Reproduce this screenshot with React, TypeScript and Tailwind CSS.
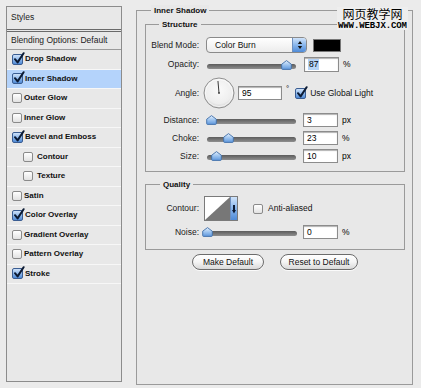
import React from "react";

const F = "font-['Liberation_Sans',Arial,sans-serif]";

function Check({ checked, className = "" }: { checked?: boolean; className?: string }) {
  if (checked) {
    return (
      <span className={`relative inline-flex w-[11px] h-[11px] shrink-0 rounded-[2px] border border-[#3a5d92] bg-linear-to-b from-[#cfe2f9] via-[#8fb9ec] to-[#4f8ad6] ${className}`}>
        <svg width="12" height="13" viewBox="0 0 12 13" className="absolute left-[0px] top-[-3px]">
          <path d="M2 7.2 L4.6 10.4 L10.6 1.2" stroke="#0b1a33" strokeWidth="2" fill="none" strokeLinecap="round" strokeLinejoin="round" />
        </svg>
      </span>
    );
  }
  return (
    <span className={`inline-flex w-[10px] h-[10px] shrink-0 rounded-[2px] border border-[#8a8a8a] bg-linear-to-b from-white to-[#e2e2e2] ${className}`} />
  );
}

function Thumb() {
  return (
    <svg width="11" height="10" viewBox="0 0 11 10">
      <defs>
        <linearGradient id="tg" x1="0" y1="0" x2="0" y2="1">
          <stop offset="0" stopColor="#e4f0fd" />
          <stop offset="0.5" stopColor="#9cc3ef" />
          <stop offset="1" stopColor="#5e97dc" />
        </linearGradient>
      </defs>
      <path d="M5.5 0.6 L10.3 4.2 L10.3 8.6 Q10.3 9.4 9.5 9.4 L1.5 9.4 Q0.7 9.4 0.7 8.6 L0.7 4.2 Z" fill="url(#tg)" stroke="#3f6ea8" strokeWidth="0.9" />
    </svg>
  );
}

function Slider({ width, pos }: { width: number; pos: number }) {
  return (
    <div className="relative h-[12px] shrink-0" style={{ width }}>
      <div className="absolute left-0 right-0 top-[5px] h-[5px] rounded-full bg-linear-to-b from-[#5c5c5c] to-[#8f8f8f]" />
      <div className="absolute top-[1px]" style={{ left: pos - 5.5 }}>
        <Thumb />
      </div>
    </div>
  );
}

function NumBox({ value, w = 35, h = 14, selected }: { value: string; w?: number; h?: number; selected?: boolean }) {
  return (
    <div
      className="flex items-center shrink-0 border border-[#8c8c8c] bg-white shadow-[inset_0_1px_1px_rgba(0,0,0,0.3)] pl-[3px] text-[8.5px] text-black"
      style={{ width: w, height: h }}
    >
      {selected ? <span className="bg-[#b5d3f7] px-[1px] leading-[11px]">{value}</span> : <span>{value}</span>}
    </div>
  );
}

function Label({ children, w = 53 }: { children: React.ReactNode; w?: number }) {
  return (
    <div className="shrink-0 text-right text-[8.5px] text-[#1a1a1a]" style={{ width: w }}>
      {children}
    </div>
  );
}

function Dial() {
  const a = (95 * Math.PI) / 180;
  const x = 16 + 12 * Math.cos(a);
  const y = 16 - 12 * Math.sin(a);
  return (
    <svg width="32" height="32" viewBox="0 0 32 32" className="shrink-0">
      <defs>
        <radialGradient id="dg" cx="0.5" cy="0.4" r="0.6">
          <stop offset="0" stopColor="#fafafa" />
          <stop offset="0.75" stopColor="#eeeeee" />
          <stop offset="1" stopColor="#cfcfcf" />
        </radialGradient>
      </defs>
      <circle cx="16" cy="16" r="15" fill="url(#dg)" stroke="#8f8f8f" strokeWidth="1" />
      <circle cx="16" cy="16" r="13.6" fill="none" stroke="#ffffff" strokeWidth="0.8" opacity="0.8" />
      <line x1="16" y1="16" x2={x} y2={y} stroke="#3a3a3a" strokeWidth="1" />
      <circle cx="16" cy="16" r="0.9" fill="#3a3a3a" />
    </svg>
  );
}

function Legend({ children, left }: { children: React.ReactNode; left: number }) {
  return (
    <div
      className="absolute top-[-6px] bg-[#e8e8e8] px-[3px] text-[8px] leading-[11px] font-bold text-[#111]"
      style={{ left }}
    >
      {children}
    </div>
  );
}

const items: { label: string; checked?: boolean; selected?: boolean; indent?: boolean }[] = [
  { label: "Drop Shadow", checked: true },
  { label: "Inner Shadow", checked: true, selected: true },
  { label: "Outer Glow" },
  { label: "Inner Glow" },
  { label: "Bevel and Emboss", checked: true },
  { label: "Contour", indent: true },
  { label: "Texture", indent: true },
  { label: "Satin" },
  { label: "Color Overlay", checked: true },
  { label: "Gradient Overlay" },
  { label: "Pattern Overlay" },
  { label: "Stroke", checked: true },
];

function Button({ children, w }: { children: React.ReactNode; w: number }) {
  return (
    <div
      className="flex h-[16px] items-center justify-center rounded-full border border-[#6c6c6c] bg-linear-to-b from-white via-[#f4f4f4] to-[#d9d9d9] text-[8.5px] text-[#111] shadow-[0_1px_0_rgba(255,255,255,0.8)]"
      style={{ width: w }}
    >
      {children}
    </div>
  );
}

export default function App() {
  return (
    <div className={`relative flex w-[421px] h-[388px] bg-[#ebebeb] pl-[6px] pt-[6px] ${F}`}>
      {/* Left list */}
      <div className="flex flex-col w-[116px] h-[376px] border border-[#8c8c8c] bg-[#e8e8e8]">
        <div className="flex h-[25px] items-center pl-[4px] pb-[1px] border-b-[3px] border-double border-[#6a6a6a] text-[8.5px] text-[#222]">
          Styles
        </div>
        <div className="flex h-[18px] items-center pl-[4px] border-b border-[#9a9a9a] text-[8.5px] text-[#222]">
          Blending Options: Default
        </div>
        {items.map((it) => (
          <div
            key={it.label}
            className={`flex h-[19.5px] items-center gap-[2px] border-b border-[#f7f7f7] text-[8px] font-bold text-[#111] ${
              it.indent ? "pl-[16px]" : "pl-[5px]"
            } ${it.selected ? "bg-[#b4d3fb]" : ""}`}
          >
            <Check checked={it.checked} className={it.indent ? "mr-[2px]" : ""} />
            <span>{it.label}</span>
          </div>
        ))}
      </div>

      {/* Right panel */}
      <div className="relative ml-[14px] mt-[4px] w-[277px] h-[375px] border border-[#9a9a9a] bg-[#e8e8e8] pl-[8px] pt-[13px]">
        <Legend left={14}>Inner Shadow</Legend>

        {/* Structure */}
        <div className="relative w-[260px] h-[148px] border border-[#9a9a9a] flex flex-col">
          <Legend left={13}>Structure</Legend>

          <div className="flex items-center h-[16px] mt-[12px]">
            <Label>Blend Mode:</Label>
            <div className="ml-[7px] flex w-[101px] h-[16px] rounded-[4px] border border-[#8a8a8a] bg-linear-to-b from-white to-[#ececec] overflow-hidden">
              <div className="flex-1 flex items-center pl-[8px] text-[8.5px] text-[#111]">Color Burn</div>
              <div className="flex w-[14px] flex-col items-center justify-center gap-[1px] border-l border-[#6d8fbf] bg-linear-to-b from-[#cfe3fa] via-[#89b6ec] to-[#4f8bd8]">
                <svg width="6" height="10" viewBox="0 0 6 10">
                  <path d="M3 1 L5.2 4 L0.8 4 Z" fill="#111" />
                  <path d="M3 9 L5.2 6 L0.8 6 Z" fill="#111" />
                </svg>
              </div>
            </div>
            <div className="ml-[6px] w-[28px] h-[13px] bg-black border border-[#777]" />
          </div>

          <div className="flex items-center h-[15px] mt-[4px]">
            <Label>Opacity:</Label>
            <div className="ml-[8px]"><Slider width={89} pos={79} /></div>
            <div className="ml-[8px]"><NumBox value="87" h={15} selected /></div>
            <span className="ml-[4px] text-[8.5px]">%</span>
          </div>

          <div className="flex items-center h-[32px] mt-[5px]">
            <Label>Angle:</Label>
            <div className="ml-[4px]"><Dial /></div>
            <div className="ml-[3px]"><NumBox value="95" w={44} /></div>
            <span className="ml-[4px] self-start mt-[8px] text-[8px] leading-[8px]">°</span>
            <Check checked className="ml-[6px]" />
            <span className="ml-[4px] text-[8.5px] text-[#111]">Use Global Light</span>
          </div>

          <div className="flex items-center h-[14px] mt-[4px]">
            <Label>Distance:</Label>
            <div className="ml-[8px]"><Slider width={89} pos={4} /></div>
            <div className="ml-[7px]"><NumBox value="3" /></div>
            <span className="ml-[4px] text-[8.5px]">px</span>
          </div>

          <div className="flex items-center h-[14px] mt-[4px]">
            <Label>Choke:</Label>
            <div className="ml-[8px]"><Slider width={89} pos={21} /></div>
            <div className="ml-[7px]"><NumBox value="23" /></div>
            <span className="ml-[4px] text-[8.5px]">%</span>
          </div>

          <div className="flex items-center h-[14px] mt-[4px]">
            <Label>Size:</Label>
            <div className="ml-[8px]"><Slider width={89} pos={9} /></div>
            <div className="ml-[7px]"><NumBox value="10" /></div>
            <span className="ml-[4px] text-[8.5px]">px</span>
          </div>
        </div>

        {/* Quality */}
        <div className="relative mt-[12px] w-[260px] h-[66px] border border-[#9a9a9a] flex flex-col">
          <Legend left={14}>Quality</Legend>

          <div className="flex items-center h-[25px] mt-[11px]">
            <Label>Contour:</Label>
            <div className="ml-[5px] flex w-[34px] h-[25px] border border-[#7a7a7a] bg-white overflow-hidden">
              <svg width="25" height="23" viewBox="0 0 25 23" className="shrink-0">
                <path d="M0 23 L25 0 L25 23 Z" fill="#777" />
              </svg>
              <div className="flex flex-1 items-center justify-center border-l border-[#6d8fbf] bg-linear-to-b from-[#cfe3fa] via-[#89b6ec] to-[#4f8bd8]">
                <svg width="4" height="10" viewBox="0 0 4 10">
                  <path d="M1 1 L3 1 L3 6 L4 6 L2 9.5 L0 6 L1 6 Z" fill="#0b1a33" />
                </svg>
              </div>
            </div>
            <Check className="ml-[15px]" />
            <span className="ml-[5px] text-[8.5px] text-[#111]">Anti-aliased</span>
          </div>

          <div className="flex items-center h-[14px] mt-[4px]">
            <Label>Noise:</Label>
            <div className="ml-[4px]"><Slider width={94} pos={4} /></div>
            <div className="ml-[6px]"><NumBox value="0" /></div>
            <span className="ml-[4px] text-[8.5px]">%</span>
          </div>
        </div>

        {/* Buttons */}
        <div className="mt-[4px] flex w-[260px] justify-center gap-[16px]">
          <Button w={72}>Make Default</Button>
          <Button w={78}>Reset to Default</Button>
        </div>
      </div>

      {/* Watermark */}
      <div className="absolute left-[337px] top-[7px] flex flex-col items-center bg-[#eeeeee] px-[1px]">
        <span className="text-[12px] leading-[13px] text-black font-['Noto_Sans_CJK_SC',sans-serif] [text-shadow:0_0_1px_#fff]">网页教学网</span>
        <span className="mt-[2px] text-[9px] leading-[8px] font-bold text-black font-['Liberation_Mono',monospace] tracking-[-0.1px]">WWW.WEBJX.COM</span>
      </div>
    </div>
  );
}
